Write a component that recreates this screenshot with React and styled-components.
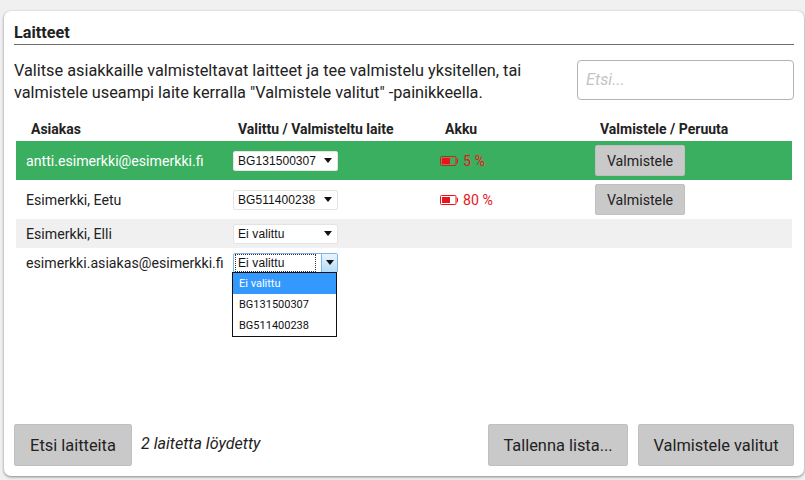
import React from "react";
import styled, { createGlobalStyle } from "styled-components";

const Global = createGlobalStyle`
  html, body { margin: 0; padding: 0; background: #f0f0f0; }
  body { width: 805px; height: 480px; overflow: hidden; font-family: Roboto, "Liberation Sans", sans-serif; color: #212529; }
`;
const Page = styled.div`
  height: 480px; box-sizing: border-box; padding: 11px 1px 4px 4px;
`;
const Card = styled.main`
  height: 465px; box-sizing: border-box; background: #fff; border-radius: 7px;
  box-shadow: 0 1px 3px rgba(0,0,0,.45);
  padding: 12px 10px 10px 10px; display: flex; flex-direction: column;
`;
const Title = styled.h2`
  margin: 0; height: 21px; font-size: 16.2px; line-height: 20px; font-weight: 700; color: #222;
  border-bottom: 1px solid #707070;
`;
const Intro = styled.div`
  display: flex; justify-content: space-between; align-items: flex-start; padding-top: 15px; height: 76px; box-sizing: border-box;
`;
const Lead = styled.p`
  margin: 0; width: 520px; font-size: 16.3px; line-height: 22px; color: #222;
`;
const Search = styled.div`
  width: 217px; height: 40px; box-sizing: border-box; border: 1px solid #b4b4b4; border-radius: 4px;
  padding: 0 8px; font-size: 16.3px; line-height: 38px; font-style: italic; color: #c4c4c4; background: #fff;
`;
const Table = styled.div`
  margin: 0 2px; flex: 1;
`;
const Head = styled.div`
  display: grid; grid-template-columns: 222px 207px 155px 1fr; height: 20px; font-size: 14px; line-height: 16px; font-weight: 700; color: #222;
`;
const HeadCell = styled.span`
  padding-left: ${p => p.$pad}px;
`;
const Row = styled.div`
  display: grid; grid-template-columns: 217px 207px 155px 1fr; align-items: center; height: ${p => p.$h}px;
  background: ${p => p.$bg || "transparent"};
  font-size: 14.15px; color: ${p => p.$light ? "#fff" : "#222"};
`;
const Name = styled.span`
  padding-left: 10px; white-space: nowrap;
`;
const SelectWrap = styled.div`
  position: relative; width: 105px; height: 20px;
`;
const Select = styled.div`
  height: 20px; width: 105px; box-sizing: border-box; background: #fff; border-radius: 2px;
  border: 1px solid ${p => p.$open ? "#7eb4ea" : "#e4e4e4"};
  display: flex; align-items: center; justify-content: space-between; padding-left: 4px;
  font-family: "Liberation Sans", sans-serif; font-size: 12px; color: #111;
`;
const SelectText = styled.span`
  letter-spacing: ${p => p.$mono ? ".005em" : "0.01em"};
  ${p => p.$open && "outline: 1px dotted #333; padding: 1px 30px 1px 2px; margin-left: -2px; line-height: 14px;"}
`;
const Caret = styled.span`
  width: 0; height: 0; margin-right: 5px; border: 4px solid transparent; border-top: 5px solid #111; border-bottom: 0;
`;
const OpenArrow = styled.span`
  width: 15px; height: 18px; display: flex; align-items: center; justify-content: center;
  background: linear-gradient(#eaf5fd, #b5dcf5); border-left: 1px solid #7eb4ea;
`;
const OpenCaret = styled(Caret)`
  margin: 0;
`;
const Menu = styled.ul`
  position: absolute; left: -1px; top: 19px; width: 105px; box-sizing: border-box; margin: 0; padding: 0; list-style: none;
  background: #fff; border: 1px solid #111; z-index: 2;
  font-family: Roboto, sans-serif; font-size: 11px; color: #111;
`;
const MenuItem = styled.li`
  height: 21px; line-height: 21px; padding-left: 6px;
  ${p => p.$active && "background: #3399ff; color: #fff;"}
`;
const Battery = styled.span`
  display: flex; align-items: center; gap: 5px; color: #e8161c; font-size: 14.15px;
`;
const BatteryIcon = () => (
  <svg width="18" height="10" viewBox="0 0 18 10">
    <rect x=".5" y=".5" width="15.5" height="9" rx="1" fill="none" stroke="#e8161c" />
    <rect x="2" y="2" width="8" height="6" fill="#e8161c" />
    <path d="M16.5 3.2h1v3.6h-1" fill="none" stroke="#e8161c" />
  </svg>
);
const Button = styled.button`
  border: 1px solid #c0c0c0; border-radius: 2px; background: #c9c9c9; color: #222;
  font-family: Roboto, sans-serif; font-size: ${p => p.$big ? 16.4 : 14.2}px; padding: 0;
  width: ${p => p.$w}px; height: ${p => p.$big ? 42 : 31}px;
`;
const Footer = styled.div`
  display: flex; align-items: center; gap: 10px; height: 42px;
`;
const Found = styled.span`
  font-size: 16.1px; font-style: italic; color: #222; margin-top: -4px; margin-left: -1px; flex: 1;
`;

const Device = ({ value }) => (
  <SelectWrap>
    <Select><SelectText $mono={value.startsWith("BG")}>{value}</SelectText><Caret /></Select>
  </SelectWrap>
);

export default function App() {
  return (
    <Page>
      <Global />
      <Card>
        <Title>Laitteet</Title>
        <Intro>
          <Lead>Valitse asiakkaille valmisteltavat laitteet ja tee valmistelu yksitellen, tai valmistele useampi laite kerralla "Valmistele valitut" -painikkeella.</Lead>
          <Search>Etsi...</Search>
        </Intro>
        <Table>
          <Head>
            <HeadCell $pad={15}>Asiakas</HeadCell>
            <HeadCell $pad={0}>Valittu / Valmisteltu laite</HeadCell>
            <HeadCell $pad={0}>Akku</HeadCell>
            <HeadCell $pad={0}>Valmistele / Peruuta</HeadCell>
          </Head>
          <Row $h={39} $bg="#3aaf60" $light>
            <Name>antti.esimerkki@esimerkki.fi</Name>
            <Device value="BG131500307" />
            <Battery><BatteryIcon />5 %</Battery>
            <Button $w={90}>Valmistele</Button>
          </Row>
          <Row $h={39}>
            <Name>Esimerkki, Eetu</Name>
            <Device value="BG511400238" />
            <Battery><BatteryIcon />80 %</Battery>
            <Button $w={90}>Valmistele</Button>
          </Row>
          <Row $h={29} $bg="#f0f0f0">
            <Name>Esimerkki, Elli</Name>
            <Device value="Ei valittu" />
          </Row>
          <Row $h={29}>
            <Name>esimerkki.asiakas@esimerkki.fi</Name>
            <SelectWrap>
              <Select $open>
                <SelectText $open>Ei valittu</SelectText>
                <OpenArrow><OpenCaret /></OpenArrow>
              </Select>
              <Menu>
                <MenuItem $active>Ei valittu</MenuItem>
                <MenuItem>BG131500307</MenuItem>
                <MenuItem>BG511400238</MenuItem>
              </Menu>
            </SelectWrap>
          </Row>
        </Table>
        <Footer>
          <Button $big $w={118}>Etsi laitteita</Button>
          <Found>2 laitetta löydetty</Found>
          <Button $big $w={140}>Tallenna lista...</Button>
          <Button $big $w={156}>Valmistele valitut</Button>
        </Footer>
      </Card>
    </Page>
  );
}
